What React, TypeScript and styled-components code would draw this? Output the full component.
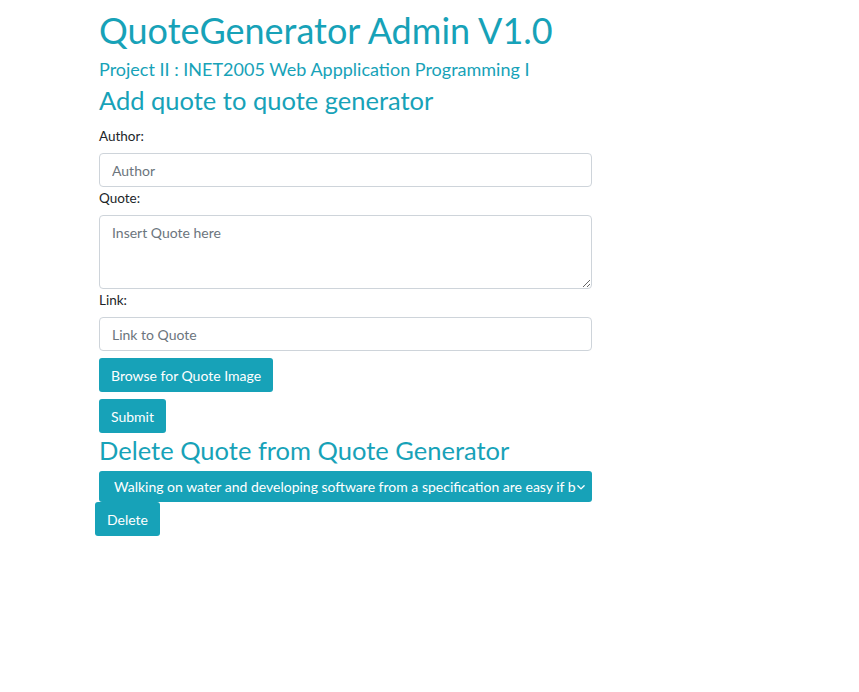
import React from "react"
import styled, { createGlobalStyle } from "styled-components"

const GlobalStyle = createGlobalStyle`
  body {
    margin: 0;
    background: #fff;
    color: #212529;
    font-family: Lato, "Liberation Sans", sans-serif;
  }
  * { box-sizing: border-box; }
`

const Page = styled.main`
  width: 592px;
  padding: 6px 0 0 99px;
  display: flex;
  flex-direction: column;
  align-items: flex-start;
`

const Title = styled.h1`
  margin: 0;
  font-size: 36px;
  font-weight: 400;
  line-height: 48px;
  color: #17a2b8;
`

const Subtitle = styled.h5`
  margin: 3px 0 0;
  font-size: 18px;
  font-weight: 400;
  line-height: 24px;
  color: #17a2b8;
`

const SectionTitle = styled.h3<{ $top?: number }>`
  margin: ${(p) => p.$top ?? 0}px 0 0;
  font-size: 25.5px;
  font-weight: 400;
  line-height: 34px;
  color: #17a2b8;
`

const Form = styled.form`
  display: flex;
  flex-direction: column;
  align-items: flex-start;
  width: 100%;
  padding-top: 8px;
`

const Label = styled.label`
  display: block;
  font-size: 13.5px;
  line-height: 20px;
  margin: 1px 0 7px;
`

const Input = styled.input`
  width: 100%;
  height: 34px;
  padding: 0 12px;
  border: 1px solid #ced4da;
  border-radius: 4px;
  font-family: inherit;
  font-size: 14px;
  color: #495057;
  &::placeholder { color: #6c757d; }
`

const TextArea = styled.textarea`
  display: block;
  width: 100%;
  height: 74px;
  padding: 8px 12px;
  border: 1px solid #ced4da;
  border-radius: 4px;
  font-family: inherit;
  font-size: 14px;
  color: #495057;
  resize: vertical;
  &::placeholder { color: #6c757d; }
`

const Button = styled.button<{ $nudge?: number; $top?: number }>`
  height: 34px;
  padding: 0 12px;
  margin: ${(p) => p.$top ?? 7}px 0 0 ${(p) => p.$nudge ?? 0}px;
  border: none;
  border-radius: 3px;
  background: #17a2b8;
  color: #fff;
  font-family: inherit;
  font-size: 14px;
  cursor: pointer;
`

const Select = styled.div`
  display: flex;
  align-items: center;
  width: 100%;
  height: 31px;
  margin-top: 4px;
  padding: 0 6px 0 15px;
  border-radius: 3px;
  background: #17a2b8;
  color: #fff;
  font-size: 14px;
`

const SelectText = styled.span`
  flex: 1;
  overflow: hidden;
  white-space: nowrap;
`

const Chevron = () => (
  <svg width="10" height="10" viewBox="0 0 16 16" fill="none" stroke="#fff" strokeWidth="2.2" strokeLinecap="round" strokeLinejoin="round">
    <path d="M3 6l5 5 5-5" />
  </svg>
)

export default function App() {
  return (
    <>
      <GlobalStyle />
      <Page>
        <Title>QuoteGenerator Admin V1.0</Title>
        <Subtitle>Project II : INET2005 Web Appplication Programming I</Subtitle>
        <SectionTitle $top={2}>Add quote to quote generator</SectionTitle>
        <Form onSubmit={(e) => e.preventDefault()}>
          <Label htmlFor="author">Author:</Label>
          <Input id="author" placeholder="Author" />
          <Label htmlFor="quote">Quote:</Label>
          <TextArea id="quote" placeholder="Insert Quote here" />
          <Label htmlFor="link">Link:</Label>
          <Input id="link" placeholder="Link to Quote" />
          <Button type="button">Browse for Quote Image</Button>
          <Button type="submit">Submit</Button>
        </Form>
        <SectionTitle>Delete Quote from Quote Generator</SectionTitle>
        <Select>
          <SelectText>
            Walking on water and developing software from a specification are easy if both are frozen.
          </SelectText>
          <Chevron />
        </Select>
        <Button type="button" $nudge={-4} $top={0}>Delete</Button>
      </Page>
    </>
  )
}
